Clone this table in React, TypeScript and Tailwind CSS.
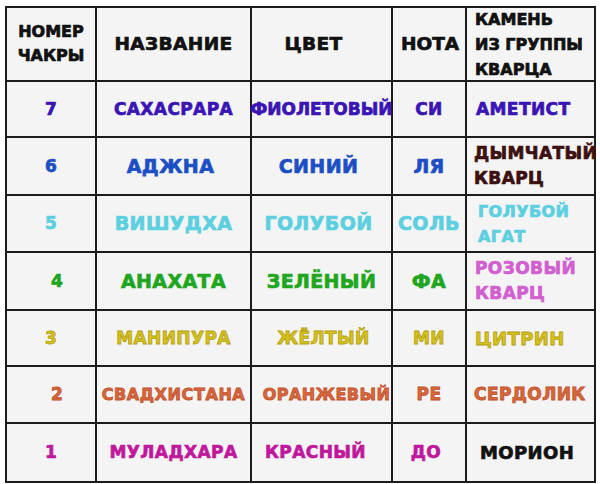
import React from "react";

type Cell = { lines: string[]; color: string; align?: "left" | "center"; size?: string; extra?: string };

const rows: { cells: Cell[] }[] = [
  {
    cells: [
      { lines: ["7"], color: "text-[#3a14b4]" },
      { lines: ["САХАСРАРА"], color: "text-[#3a14b4]" },
      { lines: ["ФИОЛЕТОВЫЙ"], color: "text-[#3a14b4]", extra: "tracking-[0px]" },
      { lines: ["СИ"], color: "text-[#3a14b4]" },
      { lines: ["АМЕТИСТ"], color: "text-[#3a14b4]", align: "left", extra: "pl-[9px]" },
    ],
  },
  {
    cells: [
      { lines: ["6"], color: "text-[#1c4fc4]" },
      { lines: ["АДЖНА"], color: "text-[#1c4fc4]", size: "text-[19px]", extra: "pr-[6px]" },
      { lines: ["СИНИЙ"], color: "text-[#1c4fc4]", size: "text-[19px]", extra: "pr-[6px]" },
      { lines: ["ЛЯ"], color: "text-[#1c4fc4]", size: "text-[19px]" },
      { lines: ["ДЫМЧАТЫЙ", "КВАРЦ"], color: "text-[#3d1010]", align: "left", extra: "pl-[4px]" },
    ],
  },
  {
    cells: [
      { lines: ["5"], color: "text-[#5ccfe0]" },
      { lines: ["ВИШУДХА"], color: "text-[#5ccfe0]", size: "text-[19px]" },
      { lines: ["ГОЛУБОЙ"], color: "text-[#5ccfe0]", size: "text-[19px]", extra: "pr-[6px]" },
      { lines: ["СОЛЬ"], color: "text-[#5ccfe0]", size: "text-[19px]" },
      { lines: ["ГОЛУБОЙ", "АГАТ"], color: "text-[#5ccfe0]", align: "left", size: "text-[16px]", extra: "pl-[11px]" },
    ],
  },
  {
    cells: [
      { lines: ["4"], color: "text-[#1ea61e]", extra: "pl-[12px]" },
      { lines: ["АНАХАТА"], color: "text-[#1ea61e]", size: "text-[19px]" },
      { lines: ["ЗЕЛЁНЫЙ"], color: "text-[#1ea61e]", size: "text-[19px]" },
      { lines: ["ФА"], color: "text-[#1ea61e]", size: "text-[19px]" },
      { lines: ["РОЗОВЫЙ", "КВАРЦ"], color: "text-[#d25fd0]", align: "left", extra: "pl-[8px]" },
    ],
  },
  {
    cells: [
      { lines: ["3"], color: "text-[#d6c21c] [-webkit-text-stroke:0.8px_#b5a010]" },
      { lines: ["МАНИПУРА"], color: "text-[#d6c21c] [-webkit-text-stroke:0.8px_#b5a010]" },
      { lines: ["ЖЁЛТЫЙ"], color: "text-[#d6c21c] [-webkit-text-stroke:0.8px_#b5a010]", extra: "pl-[4px]" },
      { lines: ["МИ"], color: "text-[#d6c21c] [-webkit-text-stroke:0.8px_#b5a010]" },
      { lines: ["ЦИТРИН"], color: "text-[#d6c21c] [-webkit-text-stroke:0.8px_#b5a010]", align: "left", size: "text-[18px]", extra: "pl-[8px]" },
    ],
  },
  {
    cells: [
      { lines: ["2"], color: "text-[#d8683c] [-webkit-text-stroke:0.8px_#c0502a]", extra: "pl-[12px]" },
      { lines: ["СВАДХИСТАНА"], color: "text-[#d8683c] [-webkit-text-stroke:0.8px_#c0502a]", size: "text-[16px]", extra: "tracking-[0.6px]" },
      { lines: ["ОРАНЖЕВЫЙ"], color: "text-[#d8683c] [-webkit-text-stroke:0.8px_#c0502a]", size: "text-[16px]", extra: "pl-[10px]" },
      { lines: ["РЕ"], color: "text-[#d8683c] [-webkit-text-stroke:0.8px_#c0502a]" },
      { lines: ["СЕРДОЛИК"], color: "text-[#d8683c] [-webkit-text-stroke:0.8px_#c0502a]", align: "left", extra: "pl-[6px]" },
    ],
  },
  {
    cells: [
      { lines: ["1"], color: "text-[#c0189c]" },
      { lines: ["МУЛАДХАРА"], color: "text-[#c0189c]" },
      { lines: ["КРАСНЫЙ"], color: "text-[#c0189c]", extra: "pr-[12px]" },
      { lines: ["ДО"], color: "text-[#c0189c]", extra: "pr-[6px]" },
      { lines: ["МОРИОН"], color: "text-[#111111]", align: "left", size: "text-[18px]", extra: "pl-[13px]" },
    ],
  },
];

export default function App() {
  return (
    <div
      className="w-[600px] h-[484px] bg-white pt-[6px] pl-[5px]"
      style={{ fontFamily: '"DejaVu Sans", "Liberation Sans", sans-serif' }}
    >
      <div className="grid w-[591px] grid-cols-[88px_153px_139px_72px_127px] grid-rows-[72px_54px_56px_55px_56px_54px_55px_57px] gap-[2px] bg-[#1c1c1c] p-[2px] font-bold [-webkit-text-stroke:0.7px_currentColor]">
        <div className="flex flex-col items-center justify-center bg-[#f4f4f4] text-[16px] leading-[24px] text-[#111]">
          <span>НОМЕР</span>
          <span>ЧАКРЫ</span>
        </div>
        <div className="flex items-center justify-center bg-[#f4f4f4] text-[18.5px] tracking-[0.4px] text-[#111]">НАЗВАНИЕ</div>
        <div className="flex items-center justify-center bg-[#f4f4f4] pr-[16px] text-[18.5px] tracking-[0.4px] text-[#111]">ЦВЕТ</div>
        <div className="flex items-center justify-center bg-[#f4f4f4] pl-[2px] text-[18.5px] text-[#111]">НОТА</div>
        <div className="flex flex-col justify-center bg-[#f4f4f4] pl-[8px] text-[16px] leading-[25px] text-[#111]">
          <span>КАМЕНЬ</span>
          <span>ИЗ ГРУППЫ</span>
          <span>КВАРЦА</span>
        </div>
        {rows.map((r, i) =>
          r.cells.map((c, j) => (
            <div
              key={`${i}-${j}`}
              className={`flex flex-col justify-center whitespace-nowrap bg-[#f4f4f4] leading-[25px] tracking-[0.4px] ${c.color} ${
                c.size ?? "text-[17px]"
              } ${c.align === "left" ? "items-start pl-[7px]" : "items-center"} ${c.extra ?? ""}`}
            >
              {c.lines.map((l) => (
                <span key={l}>{l}</span>
              ))}
            </div>
          ))
        )}
      </div>
    </div>
  );
}
